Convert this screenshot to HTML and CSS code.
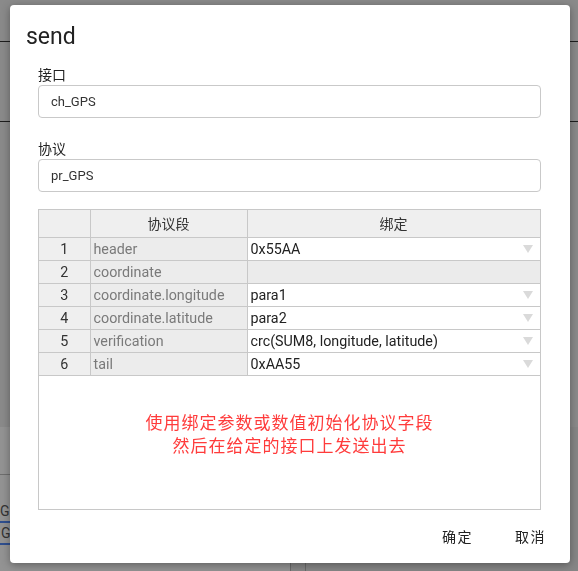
FILE: index.html
```html
<!DOCTYPE html>
<html>
<head>
<meta charset="utf-8">
<link rel="stylesheet" href="styles.css">
</head>
<body>
<div class="app">
  <div class="app-row r1"></div>
  <div class="app-row r2"></div>
  <div class="app-row r3"></div>
  <div class="app-lower">
    <div class="lower-left">
      <div class="ll-gap"></div>
      <div class="ll-line"></div>
      <div class="ll-text first">GP</div>
      <div class="ll-text second">G</div>
    </div>
    <div class="lower-mid">
      <div class="lm-split"><span></span><span></span></div>
    </div>
  </div>
</div>

<div class="overlay">
  <div class="dialog">
    <h1 class="title">send</h1>
    <div class="body">
      <div class="label">接口</div>
      <div class="input">ch_GPS</div>
      <div class="label">协议</div>
      <div class="input">pr_GPS</div>
      <div class="grid-box">
        <table class="grid">
          <colgroup>
            <col class="c-num"><col class="c-field"><col class="c-bind">
          </colgroup>
          <thead>
            <tr><th></th><th>协议段</th><th>绑定</th></tr>
          </thead>
          <tbody>
            <tr><td class="num">1</td><td class="field">header</td><td class="bind"><span>0x55AA</span><i class="arrow"></i></td></tr>
            <tr><td class="num">2</td><td class="field">coordinate</td><td class="bind empty"></td></tr>
            <tr><td class="num">3</td><td class="field">coordinate.longitude</td><td class="bind"><span>para1</span><i class="arrow"></i></td></tr>
            <tr><td class="num">4</td><td class="field">coordinate.latitude</td><td class="bind"><span>para2</span><i class="arrow"></i></td></tr>
            <tr><td class="num">5</td><td class="field">verification</td><td class="bind"><span>crc(SUM8, longitude, latitude)</span><i class="arrow"></i></td></tr>
            <tr><td class="num">6</td><td class="field">tail</td><td class="bind"><span>0xAA55</span><i class="arrow"></i></td></tr>
          </tbody>
        </table>
        <div class="hint">使用绑定参数或数值初始化协议字段<br>然后在给定的接口上发送出去</div>
      </div>
    </div>
    <div class="footer">
      <button class="btn">确定</button>
      <button class="btn">取消</button>
    </div>
  </div>
</div>
</body>
</html>
```

FILE: styles.css
```css
* { box-sizing: border-box; }
html, body { margin: 0; padding: 0; }
body {
  width: 578px;
  height: 571px;
  overflow: hidden;
  background: #8a8a8a;
  font-family: Roboto, "Noto Sans CJK SC", sans-serif;
}

/* dimmed application behind the dialog */
.app { width: 578px; height: 571px; display: flex; flex-direction: column; }
.app-row { flex: none; }
.r1 { height: 42px; border-bottom: 1px solid #1e1e1e; }
.r2 { height: 80px; border-bottom: 1px solid #1e1e1e; }
.r3 { height: 305px; }
.app-lower { flex: 1; display: flex; }
.lower-left {
  width: 290px;
  background: #939393;
  display: flex;
  flex-direction: column;
}
.ll-gap { height: 47px; }
.ll-line { height: 1px; background: #6e6e6e; margin-bottom: 28px; }
.ll-text {
  font-size: 14px;
  line-height: 16px;
  color: #333;
  height: 20px;
  border-bottom: 2px solid #2f4f8f;
  width: 60px;
  margin-bottom: 2px;
}
.ll-text.first { padding-left: 0; }
.ll-text.second { padding-left: 1px; }
.lower-mid { flex: 1; background: #868686; display: flex; flex-direction: column; justify-content: flex-end; }
.lm-split { display: flex; height: 10px; }
.lm-split span { width: 15px; border-left: 1px solid #6a6a6a; }

/* overlay + dialog */
.overlay {
  position: fixed;
  inset: 0;
  padding: 5px 8px 8px 10px;
}
.dialog {
  width: 560px;
  height: 558px;
  background: #fff;
  border-radius: 4px;
  box-shadow: 0 2px 8px rgba(0,0,0,0.35);
  display: flex;
  flex-direction: column;
  padding: 19px 24px 0 16px;
}
.title {
  margin: 0;
  font-size: 23px;
  line-height: 26px;
  font-weight: 400;
  color: #222;
}
.body {
  padding: 14px 5px 0 12px;
  display: flex;
  flex-direction: column;
}
.label {
  font-size: 14px;
  line-height: 20px;
  color: #222;
  margin-bottom: 1px;
  font-family: "Noto Sans CJK SC", sans-serif;
}
.input {
  height: 33px;
  border: 1px solid #c9c9c9;
  border-radius: 4px;
  padding: 0 12px;
  font-size: 13px;
  line-height: 31px;
  color: #333;
  margin-bottom: 20px;
}
.input:last-of-type { margin-bottom: 0; }
.grid-box {
  margin-top: -3px;
  height: 301px;
  border: 1px solid #c8c8c8;
}
.grid {
  width: 501px;
  border-collapse: collapse;
  font-size: 14.3px;
  table-layout: fixed;
}
.c-num { width: 51px; }
.c-field { width: 157px; }
.c-bind { width: 293px; }
.grid th, .grid td {
  border: 1px solid #c8c8c8;
  padding: 0 4px;
  white-space: nowrap;
  overflow: hidden;
}
.grid td.field, .grid td.bind { padding-left: 3px; }
.grid tr > :first-child { border-left: 0; }
.grid thead th { border-top: 0; }
.grid th {
  height: 27px;
  background: #efefef;
  font-weight: 400;
  color: #333;
  font-family: "Noto Sans CJK SC", sans-serif;
  font-size: 14px;
  line-height: 20px;
}
.grid td { height: 23px; line-height: 20px; }
.num { background: #efefef; text-align: center; color: #333; }
.field { background: #ececec; color: #7a7a7a; }
.bind { background: #fff; color: #222; position: relative; }
.bind.empty { background: #ebebeb; }
.arrow {
  position: absolute;
  right: 7px;
  top: 7px;
  width: 0;
  height: 0;
  border-left: 5px solid transparent;
  border-right: 5px solid transparent;
  border-top: 8px solid #dadada;
}
.hint {
  margin-top: 34px;
  text-align: center;
  color: #ff3b3b;
  font-size: 17px;
  letter-spacing: 1px;
  line-height: 23px;
  font-family: "Noto Sans CJK SC", sans-serif;
}
.footer {
  display: flex;
  justify-content: flex-end;
  gap: 42px;
  margin-top: 16px;
}
.btn {
  background: none;
  border: 0;
  padding: 0;
  font-family: "Noto Sans CJK SC", sans-serif;
  font-size: 14px;
  line-height: 21px;
  letter-spacing: 1.5px;
  color: #222;
}
```
